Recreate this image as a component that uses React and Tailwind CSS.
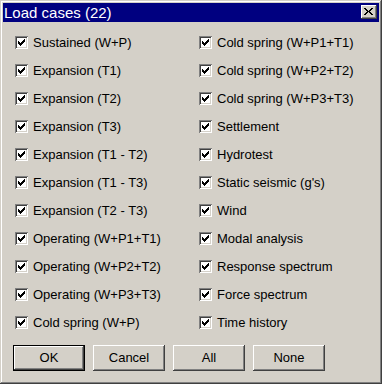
import React from "react";

const left = [
  "Sustained (W+P)",
  "Expansion (T1)",
  "Expansion (T2)",
  "Expansion (T3)",
  "Expansion (T1 - T2)",
  "Expansion (T1 - T3)",
  "Expansion (T2 - T3)",
  "Operating (W+P1+T1)",
  "Operating (W+P2+T2)",
  "Operating (W+P3+T3)",
  "Cold spring (W+P)",
];
const right = [
  "Cold spring (W+P1+T1)",
  "Cold spring (W+P2+T2)",
  "Cold spring (W+P3+T3)",
  "Settlement",
  "Hydrotest",
  "Static seismic (g's)",
  "Wind",
  "Modal analysis",
  "Response spectrum",
  "Force spectrum",
  "Time history",
];

function Check() {
  const cols = [2, 3, 4, 3, 2, 1, 0];
  return (
    <div className="w-[13px] h-[13px] bg-white shrink-0 relative shadow-[inset_1px_1px_#808080,inset_-1px_-1px_#ffffff,inset_2px_2px_#404040,inset_-2px_-2px_#d4d0c8]">
      <svg width="7" height="7" viewBox="0 0 7 7" className="absolute left-[3px] top-[3px]" shapeRendering="crispEdges">
        {cols.map((y, x) => (
          <rect key={x} x={x} y={y} width="1" height="3" fill="#000" />
        ))}
      </svg>
    </div>
  );
}

function Item({ label }) {
  return (
    <div className="h-[28px] flex items-center gap-[5px]">
      <Check />
      <span className="text-[13px] leading-none text-black whitespace-nowrap">{label}</span>
    </div>
  );
}

function Btn({ label, def }) {
  if (def) {
    return (
      <div className="w-[72px] h-[26px] border border-black">
        <div className="w-full h-full flex items-center justify-center text-[13px] text-black shadow-[inset_-1px_-1px_#404040,inset_1px_1px_#ffffff,inset_-2px_-2px_#808080,inset_2px_2px_#d4d0c8]">
          {label}
        </div>
      </div>
    );
  }
  return (
    <div className="w-[72px] h-[26px] flex items-center justify-center text-[13px] text-black shadow-[inset_-1px_-1px_#404040,inset_1px_1px_#ffffff,inset_-2px_-2px_#808080,inset_2px_2px_#d4d0c8]">
      {label}
    </div>
  );
}

export default function App() {
  const xPix = [
    [0, 0], [1, 0], [7, 0], [8, 0],
    [1, 1], [2, 1], [6, 1], [7, 1],
    [2, 2], [3, 2], [5, 2], [6, 2],
    [3, 3], [4, 3], [5, 3],
    [2, 4], [3, 4], [5, 4], [6, 4],
    [1, 5], [2, 5], [6, 5], [7, 5],
    [0, 6], [1, 6], [7, 6], [8, 6],
  ];
  return (
    <div
      className="w-[382px] h-[384px] bg-[#d4d0c8] p-[3px] flex flex-col shadow-[inset_-1px_-1px_#404040,inset_1px_1px_#d4d0c8,inset_-2px_-2px_#808080,inset_2px_2px_#ffffff]"
      style={{ fontFamily: '"Liberation Sans", Arial, sans-serif' }}
    >
      <div className="h-[19px] bg-[#000080] flex items-start justify-between pl-[1px] pr-[2px]">
        <span className="text-white text-[15px] leading-[19px]">Load cases (22)</span>
        <div className="mt-[2px] w-[16px] h-[14px] bg-[#d4d0c8] relative shadow-[inset_-1px_-1px_#404040,inset_1px_1px_#ffffff,inset_-2px_-2px_#808080,inset_2px_2px_#d4d0c8]">
          <svg width="9" height="7" viewBox="0 0 9 7" className="absolute left-[3px] top-[3px]" shapeRendering="crispEdges">
            {xPix.map(([x, y], i) => (
              <rect key={i} x={x} y={y} width="1" height="1" fill="#000" />
            ))}
          </svg>
        </div>
      </div>
      <div className="mt-[6px] pl-[12px] grid grid-cols-[184px_1fr]">
        <div className="flex flex-col">
          {left.map((l) => (
            <Item key={l} label={l} />
          ))}
        </div>
        <div className="flex flex-col">
          {right.map((l) => (
            <Item key={l} label={l} />
          ))}
        </div>
      </div>
      <div className="mt-[9px] pl-[10px] flex gap-[8px]">
        <Btn label="OK" def />
        <Btn label="Cancel" />
        <Btn label="All" />
        <Btn label="None" />
      </div>
    </div>
  );
}
